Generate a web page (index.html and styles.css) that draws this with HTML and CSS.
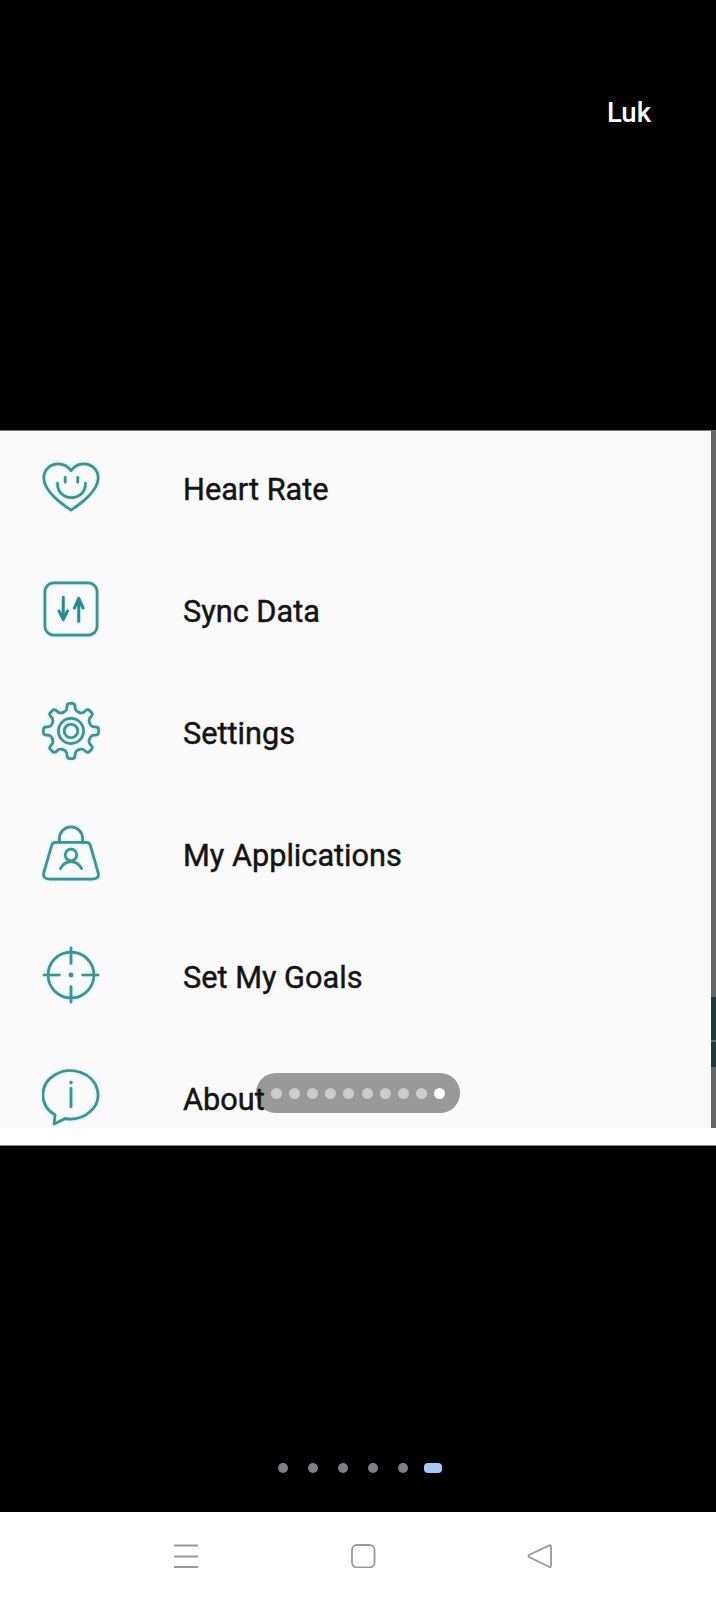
FILE: index.html
```html
<!DOCTYPE html>
<html lang="en">
<head>
    <meta charset="UTF-8">
    <meta name="viewport" content="width=device-width, initial-scale=1.0">
    <title>Luk</title>
    <link rel="stylesheet" href="styles.css">
</head>
<body>
    <div class="top">
        <div class="user-name">Luk</div>
    </div>

    <div class="panel">
        <div class="pill">
            <span class="pill-dot"></span>
            <span class="pill-dot"></span>
            <span class="pill-dot"></span>
            <span class="pill-dot"></span>
            <span class="pill-dot"></span>
            <span class="pill-dot"></span>
            <span class="pill-dot"></span>
            <span class="pill-dot"></span>
            <span class="pill-dot"></span>
            <span class="pill-dot pill-dot-active"></span>
        </div>

        <ul class="menu">
            <li class="menu-item">
                <svg class="menu-icon" viewBox="0 0 60 60">
                    <path d="M30 54C20 47 3 35 2 22C1 12 9 6 17 6C23 6 27 9 30 13C33 9 37 6 43 6C51 6 59 12 58 22C57 35 40 47 30 54Z"/>
                    <path d="M24 20V25M37 20V25M16 26C16 46 45 46 45 26"/>
                </svg>
                <span>Heart Rate</span>
            </li>
            <li class="menu-item">
                <svg class="menu-icon" viewBox="0 0 60 60">
                    <rect x="3" y="3" width="54" height="54" rx="9"/>
                    <path class="icon-arrow" d="M22 18V41M17.500 32L22 41L26.500 32M38 43V20M33.500 29L38 19L42.500 29"/>
                </svg>
                <span>Sync Data</span>
            </li>
            <li class="menu-item">
                <svg class="menu-icon" viewBox="0 0 60 60">
                    <defs>
                        <path id="tooth" d="M22 10.6Q24.5 10 25.5 7.5L26 3.5Q26.5 1.5 28.5 1.5H31.5Q33.5 1.5 34 3.5L34.5 7.5Q35.5 10 38 10.6"/>
                    </defs>
                    <use href="#tooth"/>
                    <use href="#tooth" transform="rotate(45 30 30)"/>
                    <use href="#tooth" transform="rotate(90 30 30)"/>
                    <use href="#tooth" transform="rotate(135 30 30)"/>
                    <use href="#tooth" transform="rotate(180 30 30)"/>
                    <use href="#tooth" transform="rotate(225 30 30)"/>
                    <use href="#tooth" transform="rotate(270 30 30)"/>
                    <use href="#tooth" transform="rotate(315 30 30)"/>
                    <circle cx="30" cy="30" r="13"/>
                    <circle cx="30" cy="30" r="7"/>
                </svg>
                <span>Settings</span>
            </li>
            <li class="menu-item">
                <svg class="menu-icon" viewBox="0 0 60 60">
                    <path d="M14 19H46Q49 19 50 22L58 50Q60 57 52 57H8Q0 57 2 50L10 22Q11 19 14 19Z"/>
                    <path d="M18 19V15A12 12 0 0 1 42 15V19"/>
                    <circle cx="30" cy="32" r="6"/>
                    <path d="M19 46C22 41 26 39 30 39C34 39 38 41 41 46"/>
                </svg>
                <span>My Applications</span>
            </li>
            <li class="menu-item">
                <svg class="menu-icon" viewBox="0 0 60 60">
                    <circle cx="30" cy="30" r="23.7"/>
                    <path d="M2 30H18M42 30H58M30 2V18M30 42V58"/>
                    <circle class="icon-dot" cx="30" cy="30" r="2.5"/>
                </svg>
                <span>Set My Goals</span>
            </li>
            <li class="menu-item">
                <svg class="menu-icon" viewBox="0 0 60 60">
                    <path d="M24 52.3A28.5 25 0 1 0 13.5 48.5L12.5 58Z"/>
                    <path d="M30 21V40"/>
                    <circle class="icon-dot" cx="30" cy="15" r="1.8"/>
                </svg>
                <span>About</span>
            </li>
        </ul>

        <div class="scroll-strip">
            <div class="strip-grey strip-a"></div>
            <div class="strip-teal strip-b"></div>
            <div class="strip-grey strip-c"></div>
            <div class="strip-teal strip-d"></div>
            <div class="strip-grey strip-e"></div>
        </div>
    </div>

    <div class="white-band"></div>

    <div class="bottom">
        <div class="pager">
            <span class="pager-dot"></span>
            <span class="pager-dot"></span>
            <span class="pager-dot"></span>
            <span class="pager-dot"></span>
            <span class="pager-dot"></span>
            <span class="pager-active"></span>
        </div>
    </div>

    <div class="nav-bar">
        <svg class="nav-icon" viewBox="0 0 26 24">
            <path d="M1 1.5H25M1 12.5H25M1 23H25"/>
        </svg>
        <svg class="nav-icon" viewBox="0 0 26 24">
            <rect x="2" y="1" width="22.500" height="22.500" rx="5"/>
        </svg>
        <svg class="nav-icon" viewBox="0 0 26 24">
            <path d="M24 2.500Q24 .6 22 1.600L2 11Q1 12 2 13L22 22.800Q24 23.600 24 21.500Z"/>
        </svg>
    </div>
</body>
</html>
```

FILE: styles.css
```css
* {
    box-sizing: border-box;
}

body {
    margin: 0;
    width: 716px;
    height: 1600px;
    display: flex;
    flex-direction: column;
    background: #000000;
    font-family: 'Roboto', 'Liberation Sans', sans-serif;
    overflow: hidden;
}

.top {
    height: 431px;
    padding: 95px 65px 0 0;
    display: flex;
    justify-content: flex-end;
    align-items: flex-start;
    background: #000000;
    border-bottom: 1px solid #777777;
}

.user-name {
    font-size: 27.5px;
    line-height: 36px;
    font-weight: 500;
    color: #ffffff;
}

.panel {
    position: relative;
    height: 697px;
    display: flex;
    background: #fafafa;
    overflow: hidden;
}

.menu {
    position: relative;
    flex: 1;
    margin: 0;
    padding: 26px 0 0 42px;
    list-style: none;
    display: flex;
    flex-direction: column;
    gap: 62px;
}

.menu-item {
    height: 60px;
    display: flex;
    align-items: center;
    gap: 83px;
    font-size: 30.7px;
    font-weight: 400;
    color: #141414;
    -webkit-text-stroke: 0.45px #141414;
}

.menu-item span {
    padding-top: 5px;
}

.menu-icon {
    width: 58px;
    height: 58px;
    flex-shrink: 0;
    fill: none;
    stroke: #44908f;
    stroke-width: 2.8;
    stroke-linecap: round;
    stroke-linejoin: round;
    filter: drop-shadow(0 0 1.5px #a8f0f0);
}

.menu-icon .icon-dot {
    fill: #44908f;
    stroke: none;
}

.menu-icon .icon-arrow {
    stroke: #2f8a8c;
    stroke-width: 3;
}

.scroll-strip {
    position: relative;
    width: 5px;
    display: flex;
    flex-direction: column;
}

.strip-grey {
    background: #666666;
}

.strip-teal {
    background: #17403f;
}

.strip-a { height: 566px; }
.strip-b { height: 43px; }
.strip-c { height: 2px; }
.strip-d { height: 25px; }
.strip-e { height: 61px; }

.pill {
    position: absolute;
    top: 642px;
    left: 256px;
    width: 204px;
    height: 40px;
    display: flex;
    justify-content: center;
    align-items: center;
    gap: 7.2px;
    background: #999999;
    border-radius: 20px;
}

.pill-dot {
    width: 11px;
    height: 11px;
    border-radius: 50%;
    background: #cbcbcb;
}

.pill-dot-active {
    background: #ffffff;
}

.white-band {
    height: 18px;
    background: #ffffff;
    border-bottom: 1px solid #888888;
}

.bottom {
    height: 366px;
    padding: 0 0 39px 4px;
    display: flex;
    justify-content: center;
    align-items: flex-end;
    background: #000000;
}

.pager {
    display: flex;
    align-items: center;
    gap: 20px;
}

.pager-dot {
    width: 10px;
    height: 10px;
    border-radius: 50%;
    background: #808085;
}

.pager-active {
    width: 18px;
    height: 10px;
    margin-left: -4px;
    border-radius: 4px;
    background: #a9c9f5;
}

.nav-bar {
    height: 88px;
    padding-left: 9px;
    display: flex;
    justify-content: center;
    align-items: center;
    gap: 151px;
    background: #ffffff;
}

.nav-icon {
    width: 26px;
    height: 24px;
    fill: none;
    stroke: #999999;
    stroke-width: 1.8;
    stroke-linejoin: round;
}
```
